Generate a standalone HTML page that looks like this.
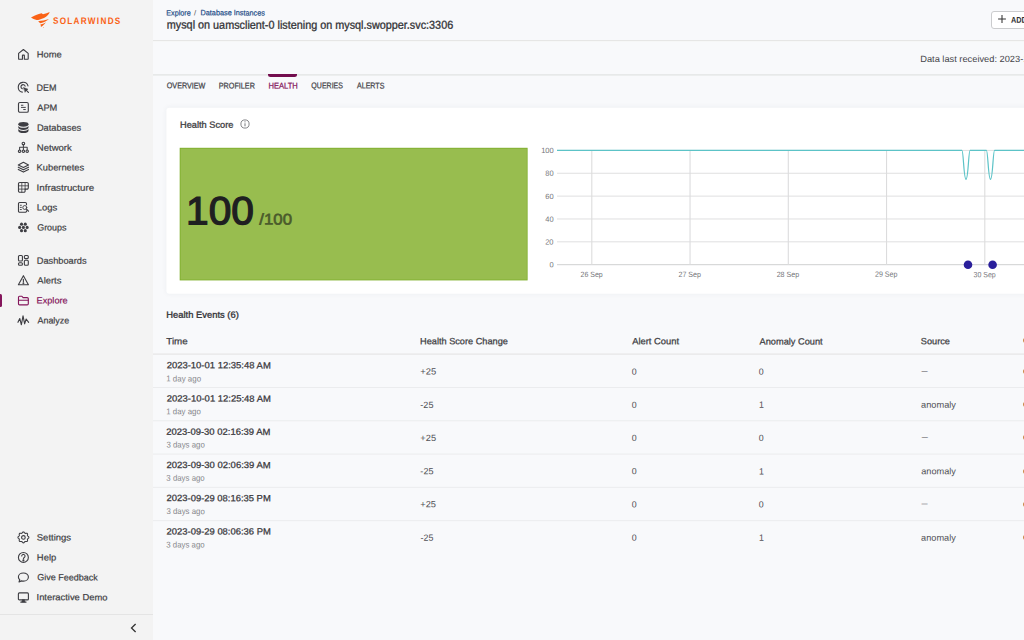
<!DOCTYPE html>
<html lang="en">
<head>
<meta charset="utf-8">
<title>mysql on uamsclient-0 listening on mysql.swopper.svc:3306</title>
<style>
*{box-sizing:border-box;margin:0;padding:0}
html,body{width:1024px;height:640px;overflow:hidden}
body{position:relative;background:#f8f9fb;font-family:"Liberation Sans",sans-serif;color:#3e3e43;font-size:9px}
.t{position:absolute;left:0;top:0;white-space:nowrap;transform-origin:0 50%}
.a{position:absolute}
#side{position:absolute;left:0;top:0;width:153px;height:640px;background:#f3f3f3}
svg.ic{position:absolute;left:17px;width:12.8px;height:12.8px;overflow:visible;fill:none;stroke:#3e3e43;stroke-width:2.1;stroke-linecap:round;stroke-linejoin:round}
svg.ic.on{stroke:#84155b}
#card{position:absolute;left:0;top:0;transform:translate(166.400px,107.700px);width:900px;height:186px;background:#fff;border-radius:3px;box-shadow:0 0 5px rgba(40,50,70,.05)}
</style>
</head>
<body>

<nav id="side">
<svg class="a" style="left:30px;top:11px;width:21px;height:18px" viewBox="30 11 21 18">
<path d="M31 17.4 C34 15.800 38 14.200 41.600 13.300 L43 14.300 C45.500 13.800 47.800 13.100 49.700 12.100 C49 14.600 47 16.600 44 17.900 C41 19.200 38.500 19.900 36.600 20 C34.500 19.400 32.500 18.500 31 17.400 Z" fill="#fa6216"/>
<path d="M38.200 21.200 C41.500 21 45.500 20.200 49 19.100 C47 21 44 22.400 40.300 23.200 C39.400 22.600 38.700 21.900 38.200 21.200 Z" fill="#fa6216"/>
<path d="M40.300 24.600 C42.300 24.200 44.200 23.400 45.900 22.300 C44.800 24.200 43 25.800 40.900 27 C41.100 26.200 40.800 25.300 40.300 24.600 Z" fill="#fa6216"/>
<circle cx="43.500" cy="27.400" r="0.400" fill="#fa6216"/>
</svg>
<div class="t" id="logo" style="font-size:9.4px;line-height:12.22px;color:#fa6216;font-weight:bold;transform:translate(52.88px,14.87px) rotate(0.0517deg) scaleX(0.8709);letter-spacing:1.5px;">SOLARWINDS</div>
<svg class="ic" style="top:48.10px" viewBox="0 0 24 24"><path d="M3 10.200 L12 2.800 L21 10.200 V20 a1.200 1.200 0 0 1 -1.200 1.200 H13.800 V14 a0.600 0.600 0 0 0 -0.600 -0.600 h-2.400 a0.600 0.600 0 0 0 -0.600 0.600 V21.200 H4.200 A1.200 1.200 0 0 1 3 20 Z"/></svg>
<div class="t" id="s_home" style="font-size:9px;line-height:11.7px;color:#3e3e43;-webkit-text-stroke:0.2px #3e3e43;transform:translate(36.76px,49.60px) rotate(0.0450deg) scaleX(1.0412);">Home</div>
<svg class="ic" style="top:81.20px" viewBox="0 0 24 24"><path d="M20.6 9.2 A9.3 9.3 0 1 0 10 20.9"/><path d="M15.2 9.6 A4 4 0 1 0 10 14.6"/><path d="M12.400 12.400 L20.600 15.400 L17.200 17.200 L15.400 20.600 Z" fill="#3e3e43" stroke-width="1"/><path d="M17.600 17.600 L21.400 21.400" stroke-width="2.200"/></svg>
<div class="t" id="s_dem" style="font-size:9px;line-height:11.7px;color:#3e3e43;-webkit-text-stroke:0.2px #3e3e43;transform:translate(36.61px,82.75px) rotate(0.0451deg) scaleX(0.9980);">DEM</div>
<svg class="ic" style="top:101.20px" viewBox="0 0 24 24"><rect x="2.8" y="2.8" width="18.4" height="18.4" rx="2.6"/><path d="M8.200 8 h3 M8.200 12 h7.500 M12.500 16 h3.200" stroke-width="1.800"/></svg>
<div class="t" id="s_apm" style="font-size:9px;line-height:11.7px;color:#3e3e43;-webkit-text-stroke:0.2px #3e3e43;transform:translate(37.26px,102.84px) rotate(0.0450deg) scaleX(1.0266);">APM</div>
<svg class="ic" style="top:121.20px" viewBox="0 0 24 24"><g fill="#3e3e43" stroke="none"><ellipse cx="12" cy="6.2" rx="9.6" ry="4.4"/><path d="M2.4 9.2 c1.5 2.3 5.2 3.6 9.6 3.6 s8.100 -1.300 9.600 -3.600 v3.200 c0 2.400 -4.300 4.400 -9.600 4.400 s-9.600 -2.000 -9.600 -4.400 z"/><path d="M2.4 15.2 c1.5 2.3 5.2 3.6 9.6 3.600 s8.100 -1.300 9.600 -3.600 v2.900 c0 2.400 -4.300 4.400 -9.600 4.400 s-9.600 -2.000 -9.600 -4.400 z"/></g></svg>
<div class="t" id="s_db" style="font-size:9px;line-height:11.7px;color:#3e3e43;-webkit-text-stroke:0.2px #3e3e43;transform:translate(36.90px,122.72px) rotate(0.0450deg) scaleX(1.0295);">Databases</div>
<svg class="ic" style="top:141.10px" viewBox="0 0 24 24"><circle cx="12" cy="4.800" r="2.400"/><path d="M12 7.200 V16.600 M4.900 16.600 V11.900 H19.100 V16.600" stroke-width="1.900"/><circle cx="4.900" cy="19.100" r="2.300"/><circle cx="12" cy="19.100" r="2.300"/><circle cx="19.100" cy="19.100" r="2.300"/></svg>
<div class="t" id="s_net" style="font-size:9px;line-height:11.7px;color:#3e3e43;-webkit-text-stroke:0.2px #3e3e43;transform:translate(36.82px,142.65px) rotate(0.0450deg) scaleX(1.0599);">Network</div>
<svg class="ic" style="top:161.10px" viewBox="0 0 24 24"><path d="M12 2.400 L21.6 7.400 L12 12.400 L2.400 7.400 Z"/><path d="M2.400 11.600 L12 16.600 L21.600 11.600"/><path d="M2.400 15.800 L12 20.800 L21.600 15.800"/></svg>
<div class="t" id="s_k8s" style="font-size:9px;line-height:11.7px;color:#3e3e43;-webkit-text-stroke:0.2px #3e3e43;transform:translate(36.61px,162.58px) rotate(0.0450deg) scaleX(1.0319);">Kubernetes</div>
<svg class="ic" style="top:181.10px" viewBox="0 0 24 24"><path d="M5.2 2.800 H18.800 a2.400 2.400 0 0 1 2.400 2.400 V12.800 a2.400 2.400 0 0 1 -2.400 2.400 H15.200 V18.800 a2.400 2.400 0 0 1 -2.400 2.400 H5.200 a2.400 2.400 0 0 1 -2.400 -2.400 V5.200 a2.400 2.400 0 0 1 2.400 -2.400 Z"/><path d="M9 2.800 V21.200 M15.200 2.800 V15.200 M2.800 9 H21.200 M2.800 15.200 H15.200" stroke-width="1.500"/></svg>
<div class="t" id="s_infra" style="font-size:9px;line-height:11.7px;color:#3e3e43;-webkit-text-stroke:0.2px #3e3e43;transform:translate(36.51px,182.63px) rotate(0.0450deg) scaleX(1.0862);">Infrastructure</div>
<svg class="ic" style="top:201.00px" viewBox="0 0 24 24"><path d="M17.800 7 V5 a2.200 2.200 0 0 0 -2.200 -2.200 H5 A2.200 2.200 0 0 0 2.800 5 V19 a2.200 2.200 0 0 0 2.200 2.200 H15.600 a2.200 2.200 0 0 0 2.200 -2.200 V18.600"/><path d="M6.200 8 h2 M6.200 12 h2 M6.200 16 h2" stroke-width="1.700"/><circle cx="14.600" cy="12.200" r="3.700" stroke-width="1.700"/><path d="M17.400 15 L21.600 19.200"/></svg>
<div class="t" id="s_logs" style="font-size:9px;line-height:11.7px;color:#3e3e43;-webkit-text-stroke:0.2px #3e3e43;transform:translate(36.63px,202.41px) rotate(0.0450deg) scaleX(1.0513);">Logs</div>
<svg class="ic" style="top:221.00px" viewBox="0 0 24 24"><g fill="#3e3e43" stroke="none"><circle cx="12" cy="12" r="2.900"/><circle cx="19" cy="12" r="2.900"/><circle cx="5" cy="12" r="2.900"/><circle cx="8.500" cy="5.900" r="2.900"/><circle cx="15.500" cy="5.900" r="2.900"/><circle cx="8.500" cy="18.100" r="2.900"/><circle cx="15.500" cy="18.100" r="2.900"/></g></svg>
<div class="t" id="s_groups" style="font-size:9px;line-height:11.7px;color:#3e3e43;-webkit-text-stroke:0.2px #3e3e43;transform:translate(37.20px,222.49px) rotate(0.0454deg) scaleX(0.9921);">Groups</div>
<svg class="ic" style="top:254.20px" viewBox="0 0 24 24"><rect x="2.800" y="2.800" width="7.400" height="10.400" rx="1.900"/><rect x="13.800" y="2.800" width="7.400" height="5.800" rx="1.900"/><rect x="2.800" y="16.400" width="7.400" height="4.800" rx="1.900"/><rect x="13.800" y="11.800" width="7.400" height="9.400" rx="1.900"/></svg>
<div class="t" id="s_dash" style="font-size:9px;line-height:11.7px;color:#3e3e43;-webkit-text-stroke:0.2px #3e3e43;transform:translate(36.75px,255.72px) rotate(0.0450deg) scaleX(1.0262);">Dashboards</div>
<svg class="ic" style="top:274.10px" viewBox="0 0 24 24"><path d="M12 3.200 L21.400 20.200 H2.600 Z"/><path d="M12 9.800 V14.400"/><circle cx="12" cy="17.300" r="0.700" fill="#3e3e43"/></svg>
<div class="t" id="s_alerts" style="font-size:9px;line-height:11.7px;color:#3e3e43;-webkit-text-stroke:0.2px #3e3e43;transform:translate(37.37px,275.56px) rotate(0.0450deg) scaleX(1.0440);">Alerts</div>
<svg class="ic on" style="top:294.10px" viewBox="0 0 24 24"><path d="M2.800 6.200 a2 2 0 0 1 2 -2 h4.400 l2.200 2.600 h7.800 a2 2 0 0 1 2 2 V18.400 a2 2 0 0 1 -2 2 H4.800 a2 2 0 0 1 -2 -2 Z"/><path d="M2.800 11.600 H21.200"/></svg>
<div class="t" id="s_explore" style="font-size:9px;line-height:11.7px;color:#84155b;-webkit-text-stroke:0.2px #84155b;transform:translate(36.55px,295.45px) rotate(0.0450deg) scaleX(1.0187);">Explore</div>
<svg class="ic" style="top:314.10px" viewBox="0 0 24 24"><path d="M1.800 15.600 L5.200 8.400 L8.200 20.200 L11.300 3.400 L14.300 18.400 L17.200 9.400 L21.800 15.600" stroke-width="2.100"/></svg>
<div class="t" id="s_analyze" style="font-size:9px;line-height:11.7px;color:#3e3e43;-webkit-text-stroke:0.2px #3e3e43;transform:translate(37.46px,315.53px) rotate(0.0453deg) scaleX(0.9939);">Analyze</div>
<svg class="ic" style="top:531.00px" viewBox="0 0 24 24"><path d="M12.00 1.75 L12.66 1.90 L13.28 2.31 L13.81 2.88 L14.28 3.48 L14.72 3.97 L15.20 4.29 L15.75 4.40 L16.41 4.36 L17.17 4.27 L17.95 4.24 L18.67 4.39 L19.25 4.75 L19.61 5.33 L19.76 6.05 L19.73 6.83 L19.64 7.59 L19.60 8.25 L19.71 8.80 L20.03 9.28 L20.52 9.72 L21.12 10.19 L21.69 10.72 L22.10 11.34 L22.25 12.00 L22.10 12.66 L21.69 13.28 L21.12 13.81 L20.52 14.28 L20.03 14.72 L19.71 15.20 L19.60 15.75 L19.64 16.41 L19.73 17.17 L19.76 17.95 L19.61 18.67 L19.25 19.25 L18.67 19.61 L17.95 19.76 L17.17 19.73 L16.41 19.64 L15.75 19.60 L15.20 19.71 L14.72 20.03 L14.28 20.52 L13.81 21.12 L13.28 21.69 L12.66 22.10 L12.00 22.25 L11.34 22.10 L10.72 21.69 L10.19 21.12 L9.72 20.52 L9.28 20.03 L8.80 19.71 L8.25 19.60 L7.59 19.64 L6.83 19.73 L6.05 19.76 L5.33 19.61 L4.75 19.25 L4.39 18.67 L4.24 17.95 L4.27 17.17 L4.36 16.41 L4.40 15.75 L4.29 15.20 L3.97 14.72 L3.48 14.28 L2.88 13.81 L2.31 13.28 L1.90 12.66 L1.75 12.00 L1.90 11.34 L2.31 10.72 L2.88 10.19 L3.48 9.72 L3.97 9.28 L4.29 8.80 L4.40 8.25 L4.36 7.59 L4.27 6.83 L4.24 6.05 L4.39 5.33 L4.75 4.75 L5.33 4.39 L6.05 4.24 L6.83 4.27 L7.59 4.36 L8.25 4.40 L8.80 4.29 L9.28 3.97 L9.72 3.48 L10.19 2.88 L10.72 2.31 L11.34 1.90 Z"/><circle cx="12" cy="12" r="3.400"/></svg>
<div class="t" id="s_settings" style="font-size:9px;line-height:11.7px;color:#3e3e43;-webkit-text-stroke:0.2px #3e3e43;transform:translate(36.80px,532.44px) rotate(0.0450deg) scaleX(1.0536);">Settings</div>
<svg class="ic" style="top:551.00px" viewBox="0 0 24 24"><circle cx="12" cy="12" r="9.300"/><path d="M8.900 9.500 a3.100 3.100 0 1 1 4.800 2.600 c-1.100 0.700 -1.700 1.300 -1.700 2.500" stroke-width="2"/><circle cx="12" cy="17.500" r="1" fill="#3e3e43"/></svg>
<div class="t" id="s_help" style="font-size:9px;line-height:11.7px;color:#3e3e43;-webkit-text-stroke:0.2px #3e3e43;transform:translate(36.85px,552.47px) rotate(0.0450deg) scaleX(1.0489);">Help</div>
<svg class="ic" style="top:570.90px" viewBox="0 0 24 24"><path d="M12 3.800 C6.600 3.800 2.600 7 2.600 11.200 c0 2 0.900 3.800 2.500 5.100 L3.800 20.400 l4.600 -1.900 c1.100 0.300 2.300 0.500 3.600 0.500 c5.400 0 9.400 -3.400 9.400 -7.800 S17.400 3.800 12 3.800 Z"/></svg>
<div class="t" id="s_feedback" style="font-size:9px;line-height:11.7px;color:#3e3e43;-webkit-text-stroke:0.2px #3e3e43;transform:translate(37.19px,572.36px) rotate(0.0450deg) scaleX(1.0001);">Give Feedback</div>
<svg class="ic" style="top:590.90px" viewBox="0 0 24 24"><rect x="2.600" y="3.600" width="18.800" height="13" rx="1.800"/><path d="M10 16.600 L9 20.600 H15 L14 16.600 Z" fill="#3e3e43" stroke-width="1"/><path d="M7 20.800 H17"/></svg>
<div class="t" id="s_demo" style="font-size:9px;line-height:11.7px;color:#3e3e43;-webkit-text-stroke:0.2px #3e3e43;transform:translate(36.55px,592.33px) rotate(0.0450deg) scaleX(1.0424);">Interactive Demo</div>
<div class="a" style="left:0;top:294.3px;width:2.200px;height:12.800px;background:#84155b;border-radius:0 1.5px 1.5px 0"></div>
<div class="a" style="left:0;top:614px;width:153px;height:1px;background:#e4e4e4"></div>
<svg class="a" style="left:128px;top:622px;width:12px;height:12px" viewBox="0 0 12 12"><path d="M7.600 2 L3.500 6 L7.600 10" fill="none" stroke="#333" stroke-width="1.300"/></svg>
</nav>
<header>
<div class="t" id="bc1" style="font-size:7.7px;line-height:10.01px;color:#214b86;-webkit-text-stroke:0.2px #214b86;transform:translate(166.27px,8.49px) rotate(0.0480deg) scaleX(0.9371);">Explore</div>
<div class="t" id="bc2" style="font-size:7.7px;line-height:10.01px;color:#555;transform:translate(194.06px,8.50px) rotate(0.0450deg) scaleX(1.0000);">/</div>
<div class="t" id="bc3" style="font-size:7.7px;line-height:10.01px;color:#214b86;-webkit-text-stroke:0.2px #214b86;transform:translate(200.54px,8.34px) rotate(0.0475deg) scaleX(0.9467);">Database Instances</div>
<div class="t" id="title" style="font-size:11.5px;line-height:14.95px;color:#333337;-webkit-text-stroke:0.3px #333337;transform:translate(166.78px,17.59px) rotate(0.0478deg) scaleX(0.9413);">mysql on uamsclient-0 listening on mysql.swopper.svc:3306</div>
<div class="a" style="left:991.3px;top:11.1px;width:60px;height:17.8px;border:1px solid #cbccce;border-radius:3px;background:#fff"></div>
<svg class="a" style="left:997.9px;top:14.9px;width:8px;height:8px" viewBox="0 0 8 8"><path d="M4 0.100 V7.900 M0.100 4 H7.900" stroke="#333" stroke-width="1.050" fill="none"/></svg>
<div class="t" id="add" style="font-size:8.3px;line-height:10.79px;color:#303033;font-weight:bold;transform:translate(1010.99px,14.75px) rotate(0.0511deg) scaleX(0.8800);">ADD</div>
<svg class="a" style="left:153px;top:0;width:871px;height:640px" viewBox="153 0 871 640"><rect x="153" y="40.000" width="871" height="1.150" fill="#e6e6e5"/><rect x="153" y="74.200" width="871" height="1.350" fill="#e3e5e4"/></svg>
<div class="t" id="dlr" style="font-size:9px;line-height:11.7px;color:#45454a;transform:translate(920.21px,54.04px) rotate(0.0450deg) scaleX(1.0300);">Data last received: 2023-10-02 12:46:00 AM</div>
<div class="t" id="tab0" style="font-size:8.3px;line-height:10.79px;color:#45454a;-webkit-text-stroke:0.25px #45454a;transform:translate(166.73px,80.36px) rotate(0.0519deg) scaleX(0.8675);">OVERVIEW</div>
<div class="t" id="tab1" style="font-size:8.3px;line-height:10.79px;color:#45454a;-webkit-text-stroke:0.25px #45454a;transform:translate(218.73px,80.39px) rotate(0.0516deg) scaleX(0.8715);">PROFILER</div>
<div class="t" id="tab2" style="font-size:8.3px;line-height:10.79px;color:#84155b;-webkit-text-stroke:0.25px #84155b;transform:translate(268.45px,80.43px) rotate(0.0493deg) scaleX(0.9121);">HEALTH</div>
<div class="t" id="tab3" style="font-size:8.3px;line-height:10.79px;color:#45454a;-webkit-text-stroke:0.25px #45454a;transform:translate(311.35px,80.34px) rotate(0.0532deg) scaleX(0.8461);">QUERIES</div>
<div class="t" id="tab4" style="font-size:8.3px;line-height:10.79px;color:#45454a;-webkit-text-stroke:0.25px #45454a;transform:translate(356.95px,80.36px) rotate(0.0526deg) scaleX(0.8561);">ALERTS</div>
<div class="a" style="left:268.2px;top:74px;width:29.200px;height:3px;background:#730d4e;border-radius:0 0 2.500px 2.500px"></div>
</header>
<main>
<section>
<div id="card"></div>
<div class="t" id="hs" style="font-size:9px;line-height:11.7px;color:#3e3e43;-webkit-text-stroke:0.3px #3e3e43;transform:translate(179.99px,119.80px) rotate(0.0450deg) scaleX(1.0275);">Health Score</div>
<svg class="a" style="left:239.500px;top:119.100px;width:10px;height:10px" viewBox="0 0 10 10"><circle cx="5" cy="5" r="4.100" fill="none" stroke="#6f7075" stroke-width="0.850"/><path d="M5 4.300 V7.300" stroke="#6f7075" stroke-width="0.950"/><circle cx="5" cy="2.800" r="0.600" fill="#6f7075"/></svg>
<svg class="a" style="left:178px;top:146px;width:352px;height:137px" viewBox="178 146 352 137"><rect x="179.700" y="147.800" width="347.900" height="132.600" fill="#7aac25"/><rect x="180.450" y="148.550" width="346.400" height="131.100" fill="#98bd4f"/></svg>
<div class="t" id="big" style="font-size:39.3px;line-height:51.09px;color:#1f1f21;-webkit-text-stroke:1.3px #1f1f21;transform:translate(186.03px,185.21px) rotate(0.0450deg) scaleX(1.0350);">100</div>
<div class="t" id="sub100" style="font-size:15.4px;line-height:20.02px;color:#4a5a2b;-webkit-text-stroke:0.6px #4a5a2b;transform:translate(259.26px,209.55px) rotate(0.0450deg) scaleX(1.0929);">/100</div>
<svg class="a" style="left:0;top:0;width:1024px;height:640px" viewBox="0 0 1024 640"><path d="M557 150.40 H1024" stroke="#dfdfe0" stroke-width="1" fill="none"/><path d="M557 173.26 H1024" stroke="#dfdfe0" stroke-width="1" fill="none"/><path d="M557 196.12 H1024" stroke="#dfdfe0" stroke-width="1" fill="none"/><path d="M557 218.98 H1024" stroke="#dfdfe0" stroke-width="1" fill="none"/><path d="M557 241.84 H1024" stroke="#dfdfe0" stroke-width="1" fill="none"/><path d="M557 264.70 H1024" stroke="#cfd0d1" stroke-width="1" fill="none"/><path d="M591.80 150.4 V264.7" stroke="#dcdcdd" stroke-width="1.100" fill="none"/><path d="M690.05 150.4 V264.7" stroke="#dcdcdd" stroke-width="1.100" fill="none"/><path d="M788.30 150.4 V264.7" stroke="#dcdcdd" stroke-width="1.100" fill="none"/><path d="M886.55 150.4 V264.7" stroke="#dcdcdd" stroke-width="1.100" fill="none"/><path d="M984.80 150.4 V264.7" stroke="#dcdcdd" stroke-width="1.100" fill="none"/><path d="M557 150.4 L961.9 150.4 C963.5 150.4 963.7 179.3 966.0 179.3 C968.3 179.3 968.5 150.4 970.1 150.4 L986.4 150.4 C988.0 150.4 988.2 179.3 990.5 179.3 C992.8 179.3 993.0 150.4 994.6 150.4 L1024 150.4" stroke="#5cc3c7" stroke-width="1.200" fill="none"/><circle cx="968" cy="264.7" r="4.300" fill="#2a1f9b"/><circle cx="992.600" cy="264.7" r="4.300" fill="#2a1f9b"/></svg>
<div class="t" id="yl100" style="font-size:7.5px;line-height:9.75px;color:#747579;transform:translate(541.15px,145.90px) rotate(0.0450deg) scaleX(1.0000);">100</div>
<div class="t" id="yl80" style="font-size:7.5px;line-height:9.75px;color:#747579;transform:translate(545.30px,168.72px) rotate(0.0450deg) scaleX(1.0000);">80</div>
<div class="t" id="yl60" style="font-size:7.5px;line-height:9.75px;color:#747579;transform:translate(545.37px,191.90px) rotate(0.0450deg) scaleX(1.0000);">60</div>
<div class="t" id="yl40" style="font-size:7.5px;line-height:9.75px;color:#747579;transform:translate(545.30px,214.86px) rotate(0.0450deg) scaleX(1.0000);">40</div>
<div class="t" id="yl20" style="font-size:7.5px;line-height:9.75px;color:#747579;transform:translate(545.15px,237.50px) rotate(0.0450deg) scaleX(1.0000);">20</div>
<div class="t" id="yl0" style="font-size:7.5px;line-height:9.75px;color:#747579;transform:translate(549.41px,260.16px) rotate(0.0450deg) scaleX(1.0000);">0</div>
<div class="t" id="xl0" style="font-size:7.7px;line-height:10.01px;color:#747579;transform:translate(580.48px,269.99px) rotate(0.0493deg) scaleX(0.9121);">26 Sep</div>
<div class="t" id="xl1" style="font-size:7.7px;line-height:10.01px;color:#747579;transform:translate(678.45px,269.91px) rotate(0.0488deg) scaleX(0.9225);">27 Sep</div>
<div class="t" id="xl2" style="font-size:7.7px;line-height:10.01px;color:#747579;transform:translate(776.64px,269.89px) rotate(0.0488deg) scaleX(0.9225);">28 Sep</div>
<div class="t" id="xl3" style="font-size:7.7px;line-height:10.01px;color:#747579;transform:translate(874.94px,269.85px) rotate(0.0488deg) scaleX(0.9225);">29 Sep</div>
<div class="t" id="xl4" style="font-size:7.7px;line-height:10.01px;color:#747579;transform:translate(973.52px,270.17px) rotate(0.0493deg) scaleX(0.9121);">30 Sep</div>
</section>
<section>
<div class="t" id="he" style="font-size:9px;line-height:11.7px;color:#333337;-webkit-text-stroke:0.3px #333337;transform:translate(166.32px,309.80px) rotate(0.0450deg) scaleX(1.0424);">Health Events (6)</div>
<div class="t" id="th0" style="font-size:9px;line-height:11.7px;color:#3e3e43;-webkit-text-stroke:0.25px #3e3e43;transform:translate(166.32px,336.28px) rotate(0.0450deg) scaleX(1.0880);">Time</div>
<div class="t" id="th1" style="font-size:9px;line-height:11.7px;color:#3e3e43;-webkit-text-stroke:0.25px #3e3e43;transform:translate(420.03px,336.29px) rotate(0.0450deg) scaleX(1.0212);">Health Score Change</div>
<div class="t" id="th2" style="font-size:9px;line-height:11.7px;color:#3e3e43;-webkit-text-stroke:0.25px #3e3e43;transform:translate(632.15px,336.27px) rotate(0.0450deg) scaleX(1.0432);">Alert Count</div>
<div class="t" id="th3" style="font-size:9px;line-height:11.7px;color:#3e3e43;-webkit-text-stroke:0.25px #3e3e43;transform:translate(759.58px,336.38px) rotate(0.0450deg) scaleX(1.0251);">Anomaly Count</div>
<div class="t" id="th4" style="font-size:9px;line-height:11.7px;color:#3e3e43;-webkit-text-stroke:0.25px #3e3e43;transform:translate(920.85px,336.34px) rotate(0.0450deg) scaleX(1.0218);">Source</div>
<div class="a" style="left:1022.900px;top:338.200px;width:6px;height:5px;border-radius:3px;background:#cc8a4a"></div>
<svg class="a" style="left:153px;top:351px;width:871px;height:6px" viewBox="153 351 871 6"><rect x="153" y="353.500" width="871" height="1.200" fill="#e6e6e6"/></svg>
<div class="t" id="r0a" style="font-size:9px;line-height:11.7px;color:#38383c;-webkit-text-stroke:0.25px #38383c;transform:translate(166.64px,360.31px) rotate(0.0450deg) scaleX(1.0513);">2023-10-01 12:35:48 AM</div>
<div class="t" id="r0b" style="font-size:8.3px;line-height:10.79px;color:#87888c;transform:translate(166.23px,373.37px) rotate(0.0471deg) scaleX(0.9553);">1 day ago</div>
<div class="t" id="r0c" style="font-size:9px;line-height:11.7px;color:#505055;transform:translate(420.28px,366.51px) rotate(0.0450deg) scaleX(1.0426);">+25</div>
<div class="t" id="r0d" style="font-size:9px;line-height:11.7px;color:#505055;transform:translate(631.73px,366.72px) rotate(0.0459deg) scaleX(0.9800);">0</div>
<div class="t" id="r0e" style="font-size:9px;line-height:11.7px;color:#505055;transform:translate(758.73px,366.72px) rotate(0.0459deg) scaleX(0.9800);">0</div>
<div class="t" id="r0f" style="font-size:9px;line-height:11.7px;color:#505055;transform:translate(921.57px,365.51px) rotate(0.0667deg) scaleX(0.6744);">—</div>
<div class="a" style="left:1022.900px;top:368.90px;width:6px;height:5px;border-radius:3px;background:#cc8a4a"></div>
<svg class="a" style="left:153px;top:384px;width:871px;height:6px" viewBox="153 384 871 6"><rect x="153" y="387.00" width="871" height="1" fill="#ebecee"/></svg>
<div class="t" id="r1a" style="font-size:9px;line-height:11.7px;color:#38383c;-webkit-text-stroke:0.25px #38383c;transform:translate(166.75px,393.57px) rotate(0.0450deg) scaleX(1.0513);">2023-10-01 12:25:48 AM</div>
<div class="t" id="r1b" style="font-size:8.3px;line-height:10.79px;color:#87888c;transform:translate(166.26px,406.33px) rotate(0.0475deg) scaleX(0.9482);">1 day ago</div>
<div class="t" id="r1c" style="font-size:9px;line-height:11.7px;color:#505055;transform:translate(420.34px,399.94px) rotate(0.0450deg) scaleX(1.0052);">-25</div>
<div class="t" id="r1d" style="font-size:9px;line-height:11.7px;color:#505055;transform:translate(631.73px,399.88px) rotate(0.0459deg) scaleX(0.9800);">0</div>
<div class="t" id="r1e" style="font-size:9px;line-height:11.7px;color:#505055;transform:translate(759.00px,399.83px) rotate(0.0459deg) scaleX(0.9800);">1</div>
<div class="t" id="r1f" style="font-size:9px;line-height:11.7px;color:#505055;transform:translate(921.05px,399.79px) rotate(0.0450deg) scaleX(1.0268);">anomaly</div>
<div class="a" style="left:1022.900px;top:402.12px;width:6px;height:5px;border-radius:3px;background:#cc8a4a"></div>
<svg class="a" style="left:153px;top:417px;width:871px;height:6px" viewBox="153 417 871 6"><rect x="153" y="420.28" width="871" height="1" fill="#ebecee"/></svg>
<div class="t" id="r2a" style="font-size:9px;line-height:11.7px;color:#38383c;-webkit-text-stroke:0.25px #38383c;transform:translate(166.22px,426.80px) rotate(0.0450deg) scaleX(1.0513);">2023-09-30 02:16:39 AM</div>
<div class="t" id="r2b" style="font-size:8.3px;line-height:10.79px;color:#87888c;transform:translate(166.39px,439.53px) rotate(0.0476deg) scaleX(0.9452);">3 days ago</div>
<div class="t" id="r2c" style="font-size:9px;line-height:11.7px;color:#505055;transform:translate(420.37px,432.97px) rotate(0.0450deg) scaleX(1.0255);">+25</div>
<div class="t" id="r2d" style="font-size:9px;line-height:11.7px;color:#505055;transform:translate(631.76px,432.98px) rotate(0.0459deg) scaleX(0.9800);">0</div>
<div class="t" id="r2e" style="font-size:9px;line-height:11.7px;color:#505055;transform:translate(758.76px,432.98px) rotate(0.0459deg) scaleX(0.9800);">0</div>
<div class="t" id="r2f" style="font-size:9px;line-height:11.7px;color:#505055;transform:translate(921.74px,431.97px) rotate(0.0667deg) scaleX(0.6744);">—</div>
<div class="a" style="left:1022.900px;top:435.34px;width:6px;height:5px;border-radius:3px;background:#cc8a4a"></div>
<svg class="a" style="left:153px;top:451px;width:871px;height:6px" viewBox="153 451 871 6"><rect x="153" y="453.56" width="871" height="1" fill="#ebecee"/></svg>
<div class="t" id="r3a" style="font-size:9px;line-height:11.7px;color:#38383c;-webkit-text-stroke:0.25px #38383c;transform:translate(166.44px,460.05px) rotate(0.0450deg) scaleX(1.0513);">2023-09-30 02:06:39 AM</div>
<div class="t" id="r3b" style="font-size:8.3px;line-height:10.79px;color:#87888c;transform:translate(166.35px,472.79px) rotate(0.0476deg) scaleX(0.9451);">3 days ago</div>
<div class="t" id="r3c" style="font-size:9px;line-height:11.7px;color:#505055;transform:translate(420.37px,466.18px) rotate(0.0450deg) scaleX(1.0052);">-25</div>
<div class="t" id="r3d" style="font-size:9px;line-height:11.7px;color:#505055;transform:translate(631.72px,466.33px) rotate(0.0459deg) scaleX(0.9800);">0</div>
<div class="t" id="r3e" style="font-size:9px;line-height:11.7px;color:#505055;transform:translate(759.02px,466.50px) rotate(0.0459deg) scaleX(0.9800);">1</div>
<div class="t" id="r3f" style="font-size:9px;line-height:11.7px;color:#505055;transform:translate(921.27px,466.31px) rotate(0.0450deg) scaleX(1.0196);">anomaly</div>
<div class="a" style="left:1022.900px;top:468.56px;width:6px;height:5px;border-radius:3px;background:#cc8a4a"></div>
<svg class="a" style="left:153px;top:484px;width:871px;height:6px" viewBox="153 484 871 6"><rect x="153" y="486.84" width="871" height="1" fill="#ebecee"/></svg>
<div class="t" id="r4a" style="font-size:9px;line-height:11.7px;color:#38383c;-webkit-text-stroke:0.25px #38383c;transform:translate(166.58px,493.11px) rotate(0.0450deg) scaleX(1.0460);">2023-09-29 08:16:35 PM</div>
<div class="t" id="r4b" style="font-size:8.3px;line-height:10.79px;color:#87888c;transform:translate(166.42px,506.10px) rotate(0.0476deg) scaleX(0.9452);">3 days ago</div>
<div class="t" id="r4c" style="font-size:9px;line-height:11.7px;color:#505055;transform:translate(420.33px,499.28px) rotate(0.0450deg) scaleX(1.0258);">+25</div>
<div class="t" id="r4d" style="font-size:9px;line-height:11.7px;color:#505055;transform:translate(631.75px,499.43px) rotate(0.0459deg) scaleX(0.9800);">0</div>
<div class="t" id="r4e" style="font-size:9px;line-height:11.7px;color:#505055;transform:translate(758.75px,499.43px) rotate(0.0459deg) scaleX(0.9800);">0</div>
<div class="t" id="r4f" style="font-size:9px;line-height:11.7px;color:#505055;transform:translate(921.58px,498.28px) rotate(0.0668deg) scaleX(0.6734);">—</div>
<div class="a" style="left:1022.900px;top:501.78px;width:6px;height:5px;border-radius:3px;background:#cc8a4a"></div>
<svg class="a" style="left:153px;top:517px;width:871px;height:6px" viewBox="153 517 871 6"><rect x="153" y="520.12" width="871" height="1" fill="#ebecee"/></svg>
<div class="t" id="r5a" style="font-size:9px;line-height:11.7px;color:#38383c;-webkit-text-stroke:0.25px #38383c;transform:translate(166.61px,526.42px) rotate(0.0450deg) scaleX(1.0460);">2023-09-29 08:06:36 PM</div>
<div class="t" id="r5b" style="font-size:8.3px;line-height:10.79px;color:#87888c;transform:translate(166.32px,539.46px) rotate(0.0476deg) scaleX(0.9452);">3 days ago</div>
<div class="t" id="r5c" style="font-size:9px;line-height:11.7px;color:#505055;transform:translate(420.50px,532.86px) rotate(0.0457deg) scaleX(0.9851);">-25</div>
<div class="t" id="r5d" style="font-size:9px;line-height:11.7px;color:#505055;transform:translate(631.74px,532.77px) rotate(0.0459deg) scaleX(0.9800);">0</div>
<div class="t" id="r5e" style="font-size:9px;line-height:11.7px;color:#505055;transform:translate(758.96px,532.70px) rotate(0.0459deg) scaleX(0.9800);">1</div>
<div class="t" id="r5f" style="font-size:9px;line-height:11.7px;color:#505055;transform:translate(921.11px,532.67px) rotate(0.0450deg) scaleX(1.0196);">anomaly</div>
<div class="a" style="left:1022.900px;top:535.00px;width:6px;height:5px;border-radius:3px;background:#cc8a4a"></div>
</section>
</main>
</body>
</html>
